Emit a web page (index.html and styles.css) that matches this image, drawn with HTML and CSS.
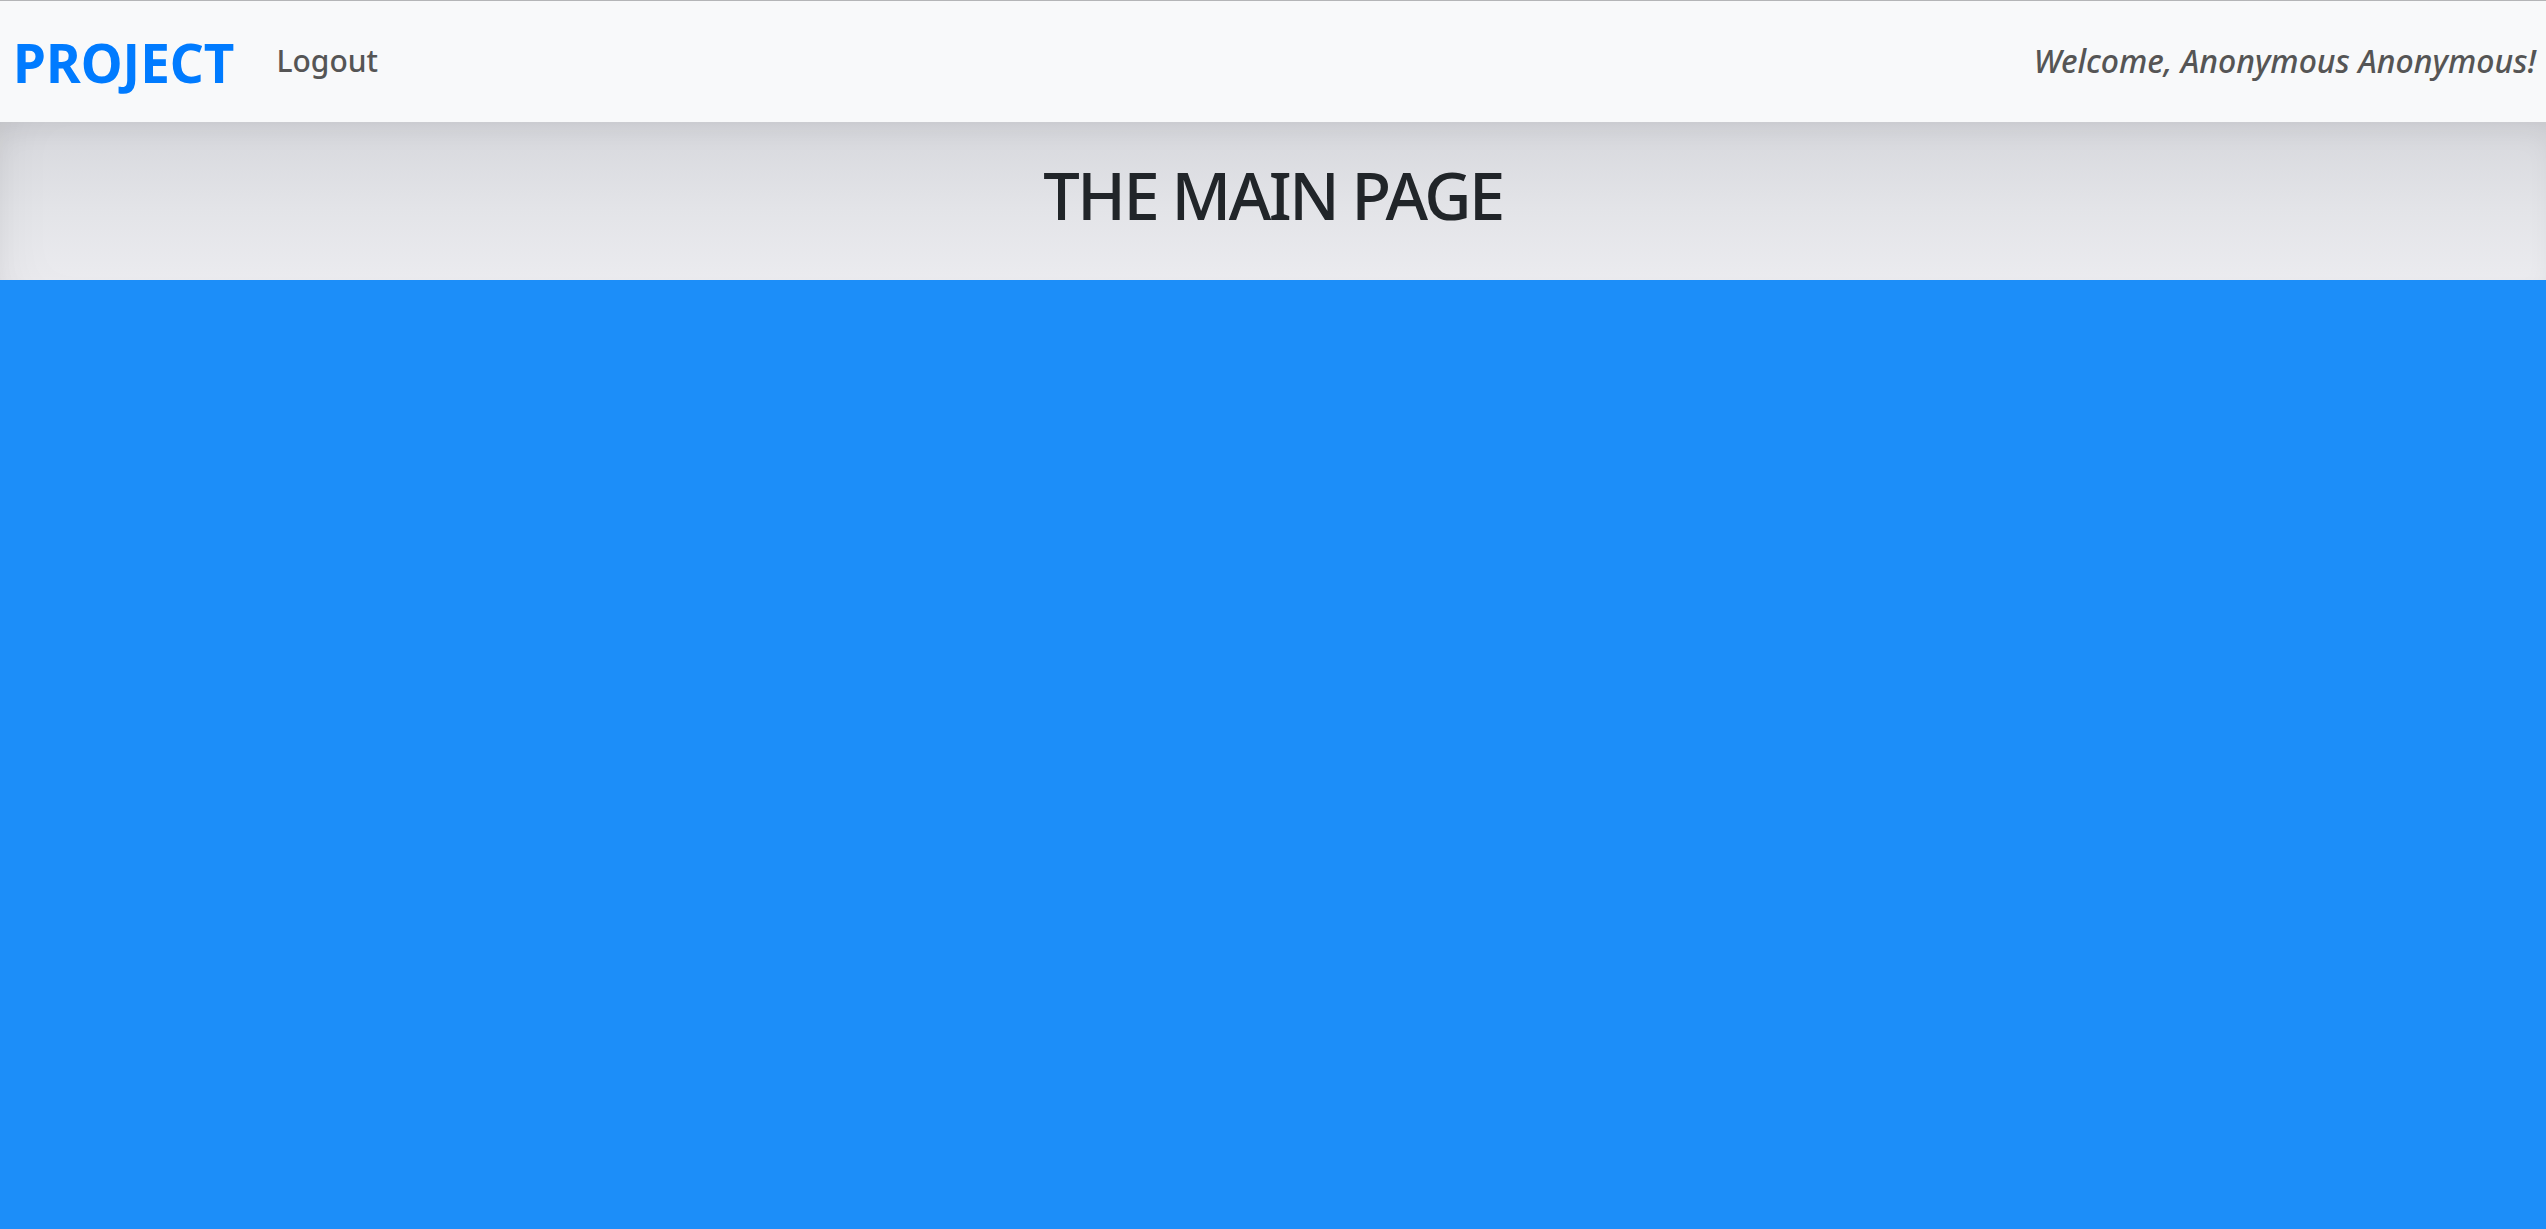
FILE: index.html
```html
<!DOCTYPE html>
<html lang="en">
<head>
<meta charset="utf-8">
<title>Project</title>
<link rel="stylesheet" href="styles.css">
</head>
<body>
<div class="page">
  <nav class="navbar">
    <div class="nav-left">
      <a class="brand" href="#">PROJECT</a>
      <a class="nav-link" href="#">Logout</a>
    </div>
    <div class="welcome">Welcome, Anonymous Anonymous!</div>
  </nav>
  <header class="title-band">
    <h1 class="title">THE MAIN PAGE</h1>
  </header>
  <main class="content"></main>
</div>
</body>
</html>
```
FILE: styles.css
```css
html, body {
  margin: 0;
  padding: 0;
  height: 100%;
}
body {
  font-family: "Noto Sans", "Open Sans", sans-serif;
  background: #1c8ef9;
}
.page {
  display: flex;
  flex-direction: column;
  min-height: 100vh;
}
.navbar {
  display: flex;
  align-items: center;
  justify-content: space-between;
  height: 122px;
  box-sizing: border-box;
  border-top: 1px solid #b4b5b7;
  background: #f8f9fa;
  padding: 0 10px 0 13px;
  position: relative;
  z-index: 1;
}
.nav-left {
  display: flex;
  align-items: center;
  gap: 42px;
}
.brand {
  color: #007bff;
  font-weight: 700;
  font-size: 53px;
  letter-spacing: 0;
  text-decoration: none;
  padding-top: 2px;
}
.nav-link {
  color: #555555;
  font-size: 30px;
  font-weight: 500;
  text-decoration: none;
  padding-bottom: 2px;
}
.welcome {
  color: #555555;
  font-size: 32px;
  font-style: italic;
  font-weight: 500;
  padding-bottom: 2px;
}
.title-band {
  height: 158px;
  display: flex;
  align-items: center;
  justify-content: center;
  background: linear-gradient(to bottom, #d6d7dc 0%, #e3e4e8 55%, #ebebef 100%);
  box-shadow: inset 0 14px 30px -10px rgba(0, 0, 0, 0.08), inset 40px 0 60px -40px rgba(0, 0, 0, 0.06);
}
.title {
  margin: 0 0 12px 0;
  font-size: 65px;
  font-weight: 500;
  letter-spacing: -2.5px;
  color: #212529;
}
.content {
  flex: 1;
  background: #1c8ef9;
}
```
